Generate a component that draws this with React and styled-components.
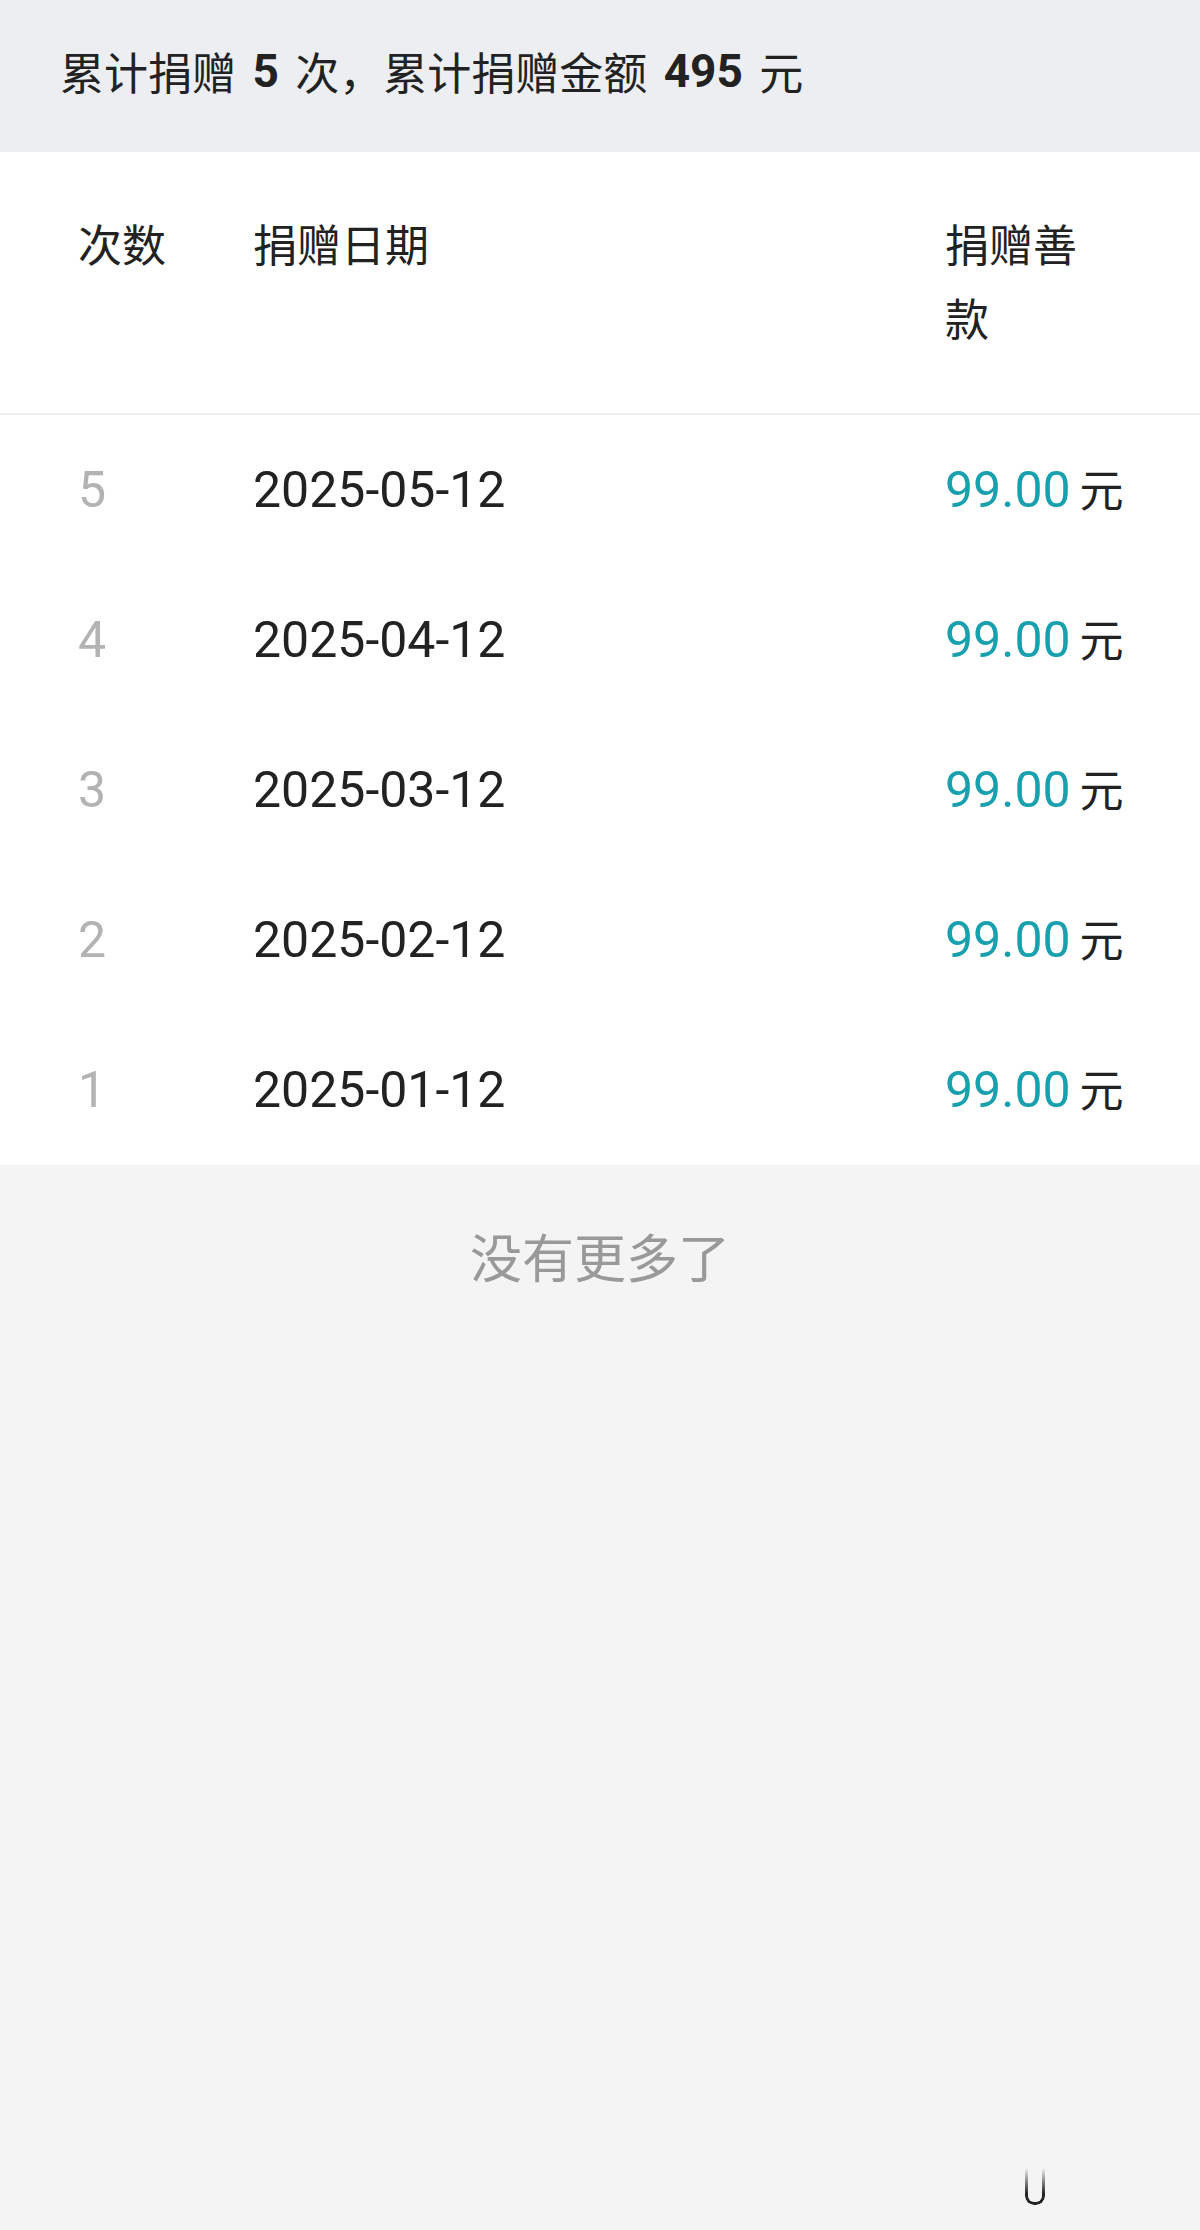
import React from "react";
import styled, { createGlobalStyle } from "styled-components";

const records = [
    { no: 5, date: "2025-05-12", amount: "99.00" },
    { no: 4, date: "2025-04-12", amount: "99.00" },
    { no: 3, date: "2025-03-12", amount: "99.00" },
    { no: 2, date: "2025-02-12", amount: "99.00" },
    { no: 1, date: "2025-01-12", amount: "99.00" },
];

const GlobalStyle = createGlobalStyle`
    body {
        margin: 0;
        background: #f4f4f4;
        font-family: "Noto Sans CJK SC", "Noto Sans", sans-serif;
    }
`

const Page = styled.div`
    position: relative;
    min-height: 2230px;
    background: #f4f4f4;
`

const Summary = styled.div`
    height: 152px;
    display: flex;
    align-items: center;
    padding-left: 60px;
    padding-bottom: 10px;
    box-sizing: border-box;
    background: #eceef2;
    font-size: 44px;
    color: #222;
    white-space: pre;
`

const Num = styled.b`
    font-family: Roboto, "Noto Sans", sans-serif;
    font-size: 46px;
    font-weight: 700;
    padding: 0 5px;
`

const Table = styled.div`
    background: #fff;
`

const Row = styled.div`
    display: grid;
    grid-template-columns: 175px 1fr 177px;
    padding: 0 78px;
    align-items: ${({ head }) => (head ? "start" : "center")};
    height: ${({ head }) => (head ? "auto" : "150px")};
`

const HeadRow = styled(Row)`
    padding-top: 54px;
    padding-bottom: 59px;
    border-bottom: 2px solid #eeeeee;
    font-size: 44px;
    line-height: 74px;
    color: #222;
`

const AmountHead = styled.div`
    max-width: 140px;
`

const Index = styled.div`
    font-family: Roboto, sans-serif;
    font-size: 50px;
    color: #b3b3b3;
`

const DateCell = styled.div`
    font-family: Roboto, sans-serif;
    font-size: 50px;
    color: #222;
`

const Amount = styled.div`
    display: flex;
    align-items: center;
    gap: 9px;
`

const Money = styled.span`
    font-family: Roboto, sans-serif;
    font-size: 50px;
    color: #19a0ae;
`

const Unit = styled.span`
    font-size: 44px;
    color: #222;
    margin-top: -4px;
`

const NoMore = styled.div`
    padding-top: 55px;
    text-align: center;
    font-size: 52px;
    line-height: 72px;
    color: #999;
`

const Watermark = styled.div`
    position: absolute;
    right: 155px;
    bottom: 25px;
    width: 14px;
    height: 34px;
    border: 3px solid #222;
    border-top: none;
    border-radius: 0 0 9px 9px;
    -webkit-mask-image: linear-gradient(to bottom, transparent, #000 70%);
    mask-image: linear-gradient(to bottom, transparent, #000 70%);
`

const App = () => {
    return (
        <Page>
            <GlobalStyle />
            <Summary>
                累计捐赠<Num> 5 </Num>次，累计捐赠金额<Num> 495 </Num>元
            </Summary>
            <Table>
                <HeadRow head>
                    <div>次数</div>
                    <div>捐赠日期</div>
                    <AmountHead>捐赠善款</AmountHead>
                </HeadRow>
                {records.map((r) => (
                    <Row key={r.no}>
                        <Index>{r.no}</Index>
                        <DateCell>{r.date}</DateCell>
                        <Amount>
                            <Money>{r.amount}</Money>
                            <Unit>元</Unit>
                        </Amount>
                    </Row>
                ))}
            </Table>
            <NoMore>没有更多了</NoMore>
            <Watermark />
        </Page>
    );
};

export default App;
